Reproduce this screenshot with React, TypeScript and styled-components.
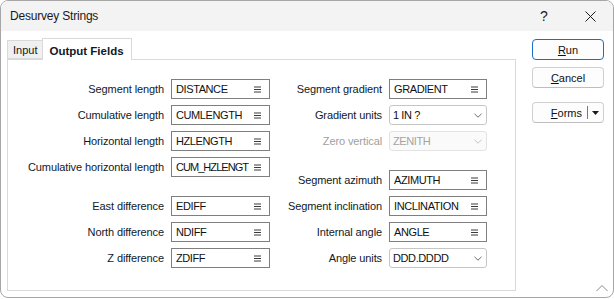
import React from "react";
import styled, { createGlobalStyle } from "styled-components";

type Field = {
  label: string;
  value: string;
  kind: "text" | "select";
  disabled?: boolean;
  tight?: boolean;
};
type Item = Field | "spacer";

const leftItems: Item[] = [
  { label: "Segment length", value: "DISTANCE", kind: "text" },
  { label: "Cumulative length", value: "CUMLENGTH", kind: "text" },
  { label: "Horizontal length", value: "HZLENGTH", kind: "text" },
  { label: "Cumulative horizontal length", value: "CUM_HZLENGT", kind: "text", tight: true },
  "spacer",
  { label: "East difference", value: "EDIFF", kind: "text" },
  { label: "North difference", value: "NDIFF", kind: "text" },
  { label: "Z difference", value: "ZDIFF", kind: "text" },
];

const rightItems: Item[] = [
  { label: "Segment gradient", value: "GRADIENT", kind: "text" },
  { label: "Gradient units", value: "1 IN ?", kind: "select" },
  { label: "Zero vertical", value: "ZENITH", kind: "select", disabled: true },
  "spacer",
  { label: "Segment azimuth", value: "AZIMUTH", kind: "text" },
  { label: "Segment inclination", value: "INCLINATION", kind: "text" },
  { label: "Internal angle", value: "ANGLE", kind: "text" },
  { label: "Angle units", value: "DDD.DDDD", kind: "select" },
];

const ListIcon = () => (
  <svg width="7" height="7" viewBox="0 0 7 7">
    <g stroke="#3a3a3a" strokeWidth="1">
      <line x1="0" y1="1" x2="7" y2="1" />
      <line x1="0" y1="3.5" x2="7" y2="3.5" />
      <line x1="0" y1="6" x2="7" y2="6" />
    </g>
  </svg>
);

const Chevron = ({ color }: { color: string }) => (
  <svg width="8" height="5" viewBox="0 0 8 5">
    <polyline points="0.5,0.8 4,4.2 7.5,0.8" fill="none" stroke={color} strokeWidth="1" />
  </svg>
);

const App = () => {
  const renderColumn = (items: Item[], labelWidth: number, boxWidth: number) =>
    items.map((item, i) =>
      item === "spacer" ? (
        <Spacer key={i} />
      ) : (
        <Row key={i} $labelWidth={labelWidth} $boxWidth={boxWidth}>
          <Label $disabled={item.disabled}>{item.label}</Label>
          <Box $kind={item.kind} $disabled={item.disabled}>
            <Value $tight={item.tight}>{item.value}</Value>
            {item.kind === "text" ? (
              <ListIcon />
            ) : (
              <Chevron color={item.disabled ? "#c4c4c4" : "#6a6a6a"} />
            )}
          </Box>
        </Row>
      )
    );

  return (
    <>
      <GlobalStyle />
      <Window>
        <TitleBar>
          <Title>Desurvey Strings</Title>
          <CaptionButton>?</CaptionButton>
          <CaptionButton>
            <svg width="11" height="11" viewBox="0 0 11 11">
              <g stroke="#1a1a1a" strokeWidth="1">
                <line x1="0.5" y1="0.5" x2="10.5" y2="10.5" />
                <line x1="10.5" y1="0.5" x2="0.5" y2="10.5" />
              </g>
            </svg>
          </CaptionButton>
        </TitleBar>
        <Body>
          <Main>
            <TabStrip>
              <Tab>Input</Tab>
              <Tab $active>Output Fields</Tab>
            </TabStrip>
            <Panel>
              <Column>{renderColumn(leftItems, 144, 99)}</Column>
              <Column>{renderColumn(rightItems, 100, 98)}</Column>
            </Panel>
          </Main>
          <Side>
            <Button $primary>
              <u>R</u>un
            </Button>
            <Button>
              <u>C</u>ancel
            </Button>
            <SplitButton>
              <SplitText>
                <u>F</u>orms
              </SplitText>
              <SplitDivider />
              <SplitArrow>
                <svg width="7" height="4" viewBox="0 0 7 4">
                  <polygon points="0,0 7,0 3.5,4" fill="#1a1a1a" />
                </svg>
              </SplitArrow>
            </SplitButton>
          </Side>
        </Body>
        <Grip>
          <svg width="12" height="8" viewBox="0 0 12 8">
            <polyline points="0.5,7 6,1.5 11.5,7" fill="none" stroke="#8a8a8a" strokeWidth="1" />
          </svg>
        </Grip>
      </Window>
    </>
  );
};

const GlobalStyle = createGlobalStyle`
  body {
    margin: 0;
    background: #ffffff;
    font-family: "Liberation Sans", Arial, sans-serif;
  }
`;

const Window = styled.div`
  position: relative;
  width: 614px;
  height: 298px;
  box-sizing: border-box;
  border: 1px solid #a6a6a6;
  border-radius: 8px;
  overflow: hidden;
  background: #ffffff;
  display: flex;
  flex-direction: column;
`;

const TitleBar = styled.div`
  height: 30px;
  flex: none;
  display: flex;
  align-items: center;
  background: #f3f3f3;
  padding-left: 9px;
`;

const Title = styled.div`
  flex: 1;
  font-size: 12px;
  letter-spacing: -0.2px;
  color: #1a1a1a;
`;

const CaptionButton = styled.div`
  width: 46px;
  height: 30px;
  display: flex;
  align-items: center;
  justify-content: center;
  font-size: 14px;
  color: #1a1a1a;
`;

const Body = styled.div`
  display: flex;
  padding: 7px 0 0 6px;
`;

const Main = styled.div`
  width: 509px;
  display: flex;
  flex-direction: column;
`;

const TabStrip = styled.div`
  height: 21px;
  display: flex;
  align-items: flex-end;
`;

const Tab = styled.div<{ $active?: boolean }>`
  position: relative;
  z-index: 1;
  box-sizing: border-box;
  height: ${(p) => (p.$active ? "22px" : "19px")};
  margin-bottom: ${(p) => (p.$active ? "-1px" : "0")};
  margin-left: ${(p) => (p.$active ? "-1px" : "0")};
  padding: ${(p) => (p.$active ? "2px 7px 0 6px" : "1px 5px 0 5px")};
  border: 1px solid #d9d9d9;
  border-bottom: ${(p) => (p.$active ? "none" : "1px solid #d9d9d9")};
  background: ${(p) => (p.$active ? "#ffffff" : "#f0f0f0")};
  display: flex;
  align-items: center;
  font-size: ${(p) => (p.$active ? "11.5px" : "11px")};
  font-weight: ${(p) => (p.$active ? "bold" : "normal")};
  color: #111827;
`;

const Panel = styled.div`
  height: 232px;
  box-sizing: border-box;
  border: 1px solid #d9d9d9;
  padding: 16px 0 0 12px;
  display: flex;
  gap: 12px;
`;

const Column = styled.div`
  display: flex;
  flex-direction: column;
`;

const Spacer = styled.div`
  height: 13px;
`;

const Row = styled.div<{ $labelWidth: number; $boxWidth: number }>`
  height: 26px;
  display: grid;
  grid-template-columns: ${(p) => `${p.$labelWidth}px ${p.$boxWidth}px`};
  column-gap: 7px;
  align-items: center;
`;

const Label = styled.div<{ $disabled?: boolean }>`
  text-align: right;
  white-space: nowrap;
  font-size: 11px;
  letter-spacing: -0.1px;
  color: ${(p) => (p.$disabled ? "#a0a0a0" : "#111827")};
`;

const Box = styled.div<{ $kind: "text" | "select"; $disabled?: boolean }>`
  height: 20px;
  box-sizing: border-box;
  display: flex;
  align-items: center;
  gap: 3px;
  padding: ${(p) => (p.$kind === "text" ? "0 8px 0 4px" : "0 4px 0 3px")};
  border: 1px solid
    ${(p) => (p.$disabled ? "#e3e3e3" : p.$kind === "text" ? "#7f7f7f" : "#c6c6c6")};
  border-radius: ${(p) => (p.$kind === "select" ? "3px" : "0")};
  background: ${(p) => (p.$disabled ? "#fafafa" : "#ffffff")};
  color: ${(p) => (p.$disabled ? "#a3a3a3" : "#111111")};
  font-size: 11px;
`;

const Value = styled.div<{ $tight?: boolean }>`
  flex: 1;
  min-width: 0;
  white-space: nowrap;
  letter-spacing: ${(p) => (p.$tight ? "-0.95px" : "-0.4px")};
`;

const Side = styled.div`
  margin-left: 16px;
  width: 72px;
  display: flex;
  flex-direction: column;
  padding-top: 1px;
`;

const Button = styled.div<{ $primary?: boolean }>`
  height: 21px;
  box-sizing: border-box;
  margin-bottom: 7px;
  border: 1px solid ${(p) => (p.$primary ? "#1a6fc4" : "#d0d0d0")};
  border-bottom-color: ${(p) => (p.$primary ? "#1a6fc4" : "#bdbdbd")};
  border-radius: 4px;
  background: #fdfdfd;
  display: flex;
  align-items: center;
  justify-content: center;
  font-size: 11px;
  color: #111111;
`;

const SplitButton = styled.div`
  margin-top: 7px;
  height: 21px;
  box-sizing: border-box;
  border: 1px solid #d0d0d0;
  border-bottom-color: #bdbdbd;
  border-radius: 4px;
  background: #fdfdfd;
  display: flex;
  align-items: center;
  font-size: 11px;
  color: #111111;
`;

const SplitText = styled.div`
  flex: 1;
  text-align: right;
  padding-right: 5px;
`;

const SplitDivider = styled.div`
  width: 1px;
  height: 13px;
  background: #7a7a7a;
`;

const SplitArrow = styled.div`
  width: 15px;
  display: flex;
  justify-content: center;
`;

const Grip = styled.div`
  position: absolute;
  right: 5px;
  bottom: 5px;
  line-height: 0;
`;

export default App;
